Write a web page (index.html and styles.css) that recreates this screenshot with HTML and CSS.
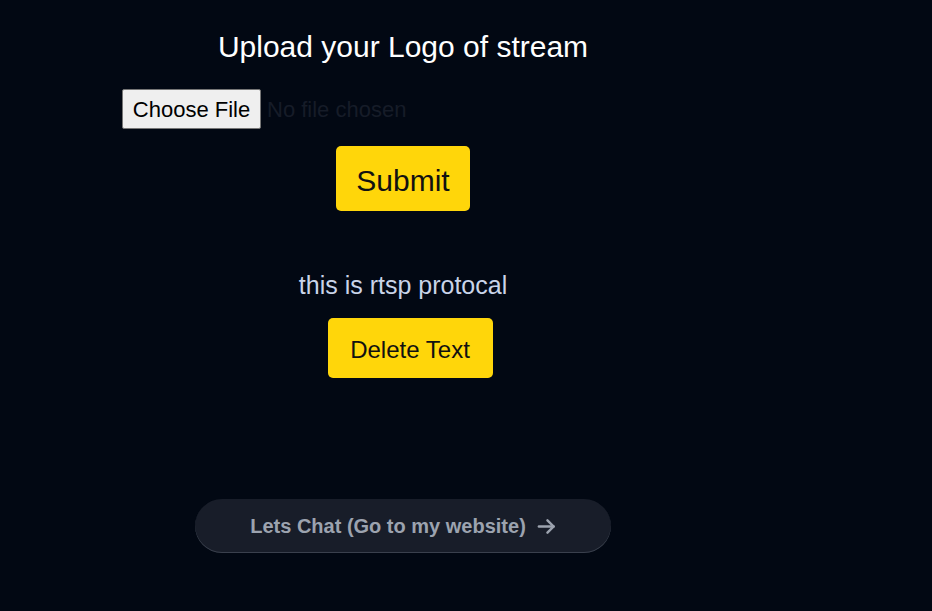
FILE: index.html
```html
<!DOCTYPE html>
<html lang="en">
<head>
<meta charset="utf-8">
<title>Upload Logo</title>
<link rel="stylesheet" href="styles.css">
</head>
<body>
<main class="page">
  <h1 class="title">Upload your Logo of stream</h1>
  <form class="upload">
    <input class="file" type="file" accept="image/*">
    <button class="btn btn-submit" type="button">Submit</button>
  </form>
  <p class="stream-text">this is rtsp protocal</p>
  <button class="btn btn-delete" type="button">Delete Text</button>
  <a class="chat" href="#">
    <span>Lets Chat (Go to my website)</span>
    <svg class="arrow" width="19" height="19" viewBox="0 0 20 20" fill="none" stroke="currentColor" stroke-width="2.6" stroke-linecap="round" stroke-linejoin="round"><path d="M2 10h15.5"/><path d="M11 3.5l6.5 6.5-6.5 6.5"/></svg>
  </a>
</main>
</body>
</html>
```
FILE: styles.css
```css
* { box-sizing: border-box; }
html, body {
  margin: 0;
  height: 100%;
  background: #020813;
}
body {
  font-family: "Liberation Sans", Arial, sans-serif;
  overflow: hidden;
}
.page {
  width: 806px;
  display: flex;
  flex-direction: column;
  align-items: center;
  padding-top: 29px;
}
.title {
  margin: 0;
  font-size: 30px;
  font-weight: 400;
  line-height: 35px;
  color: #ffffff;
}
.upload {
  display: flex;
  flex-direction: column;
  align-items: center;
  margin-top: 25px;
}
.file {
  width: 562px;
  font-family: "Liberation Sans", Arial, sans-serif;
  font-size: 22px;
  color: #161c28;
  height: 40px;
}
.file::file-selector-button {
  font-family: "Liberation Sans", Arial, sans-serif;
  font-size: 22px;
  color: #000;
  background: #efefef;
  border: 1px solid #767676;
  border-radius: 2px;
  height: 40px;
  width: 139px;
  padding: 2px 0 0;
  margin-right: 6px;
}
.btn {
  border: none;
  background: #ffd60a;
  color: #111;
  font-family: "Liberation Sans", Arial, sans-serif;
  border-radius: 5px;
  cursor: pointer;
}
.btn-submit {
  margin-top: 17px;
  font-size: 30px;
  width: 134px;
  height: 65px;
  padding: 4px 0 0;
}
.stream-text {
  margin: 60px 0 0;
  font-size: 25px;
  line-height: 28px;
  color: #c9d4e9;
}
.btn-delete {
  margin-top: 19px;
  margin-left: 14px;
  font-size: 24px;
  width: 165px;
  height: 60px;
  padding: 4px 0 0;
}
.chat {
  margin-top: 121px;
  width: 416px;
  height: 54px;
  border-radius: 27px;
  background: #181d29;
  box-shadow: inset 0 -1px 0 #3a404d;
  display: flex;
  align-items: center;
  justify-content: center;
  gap: 11px;
  color: #9ca3af;
  font-size: 20px;
  font-weight: 700;
  text-decoration: none;
}
.arrow { display: block; }
```
